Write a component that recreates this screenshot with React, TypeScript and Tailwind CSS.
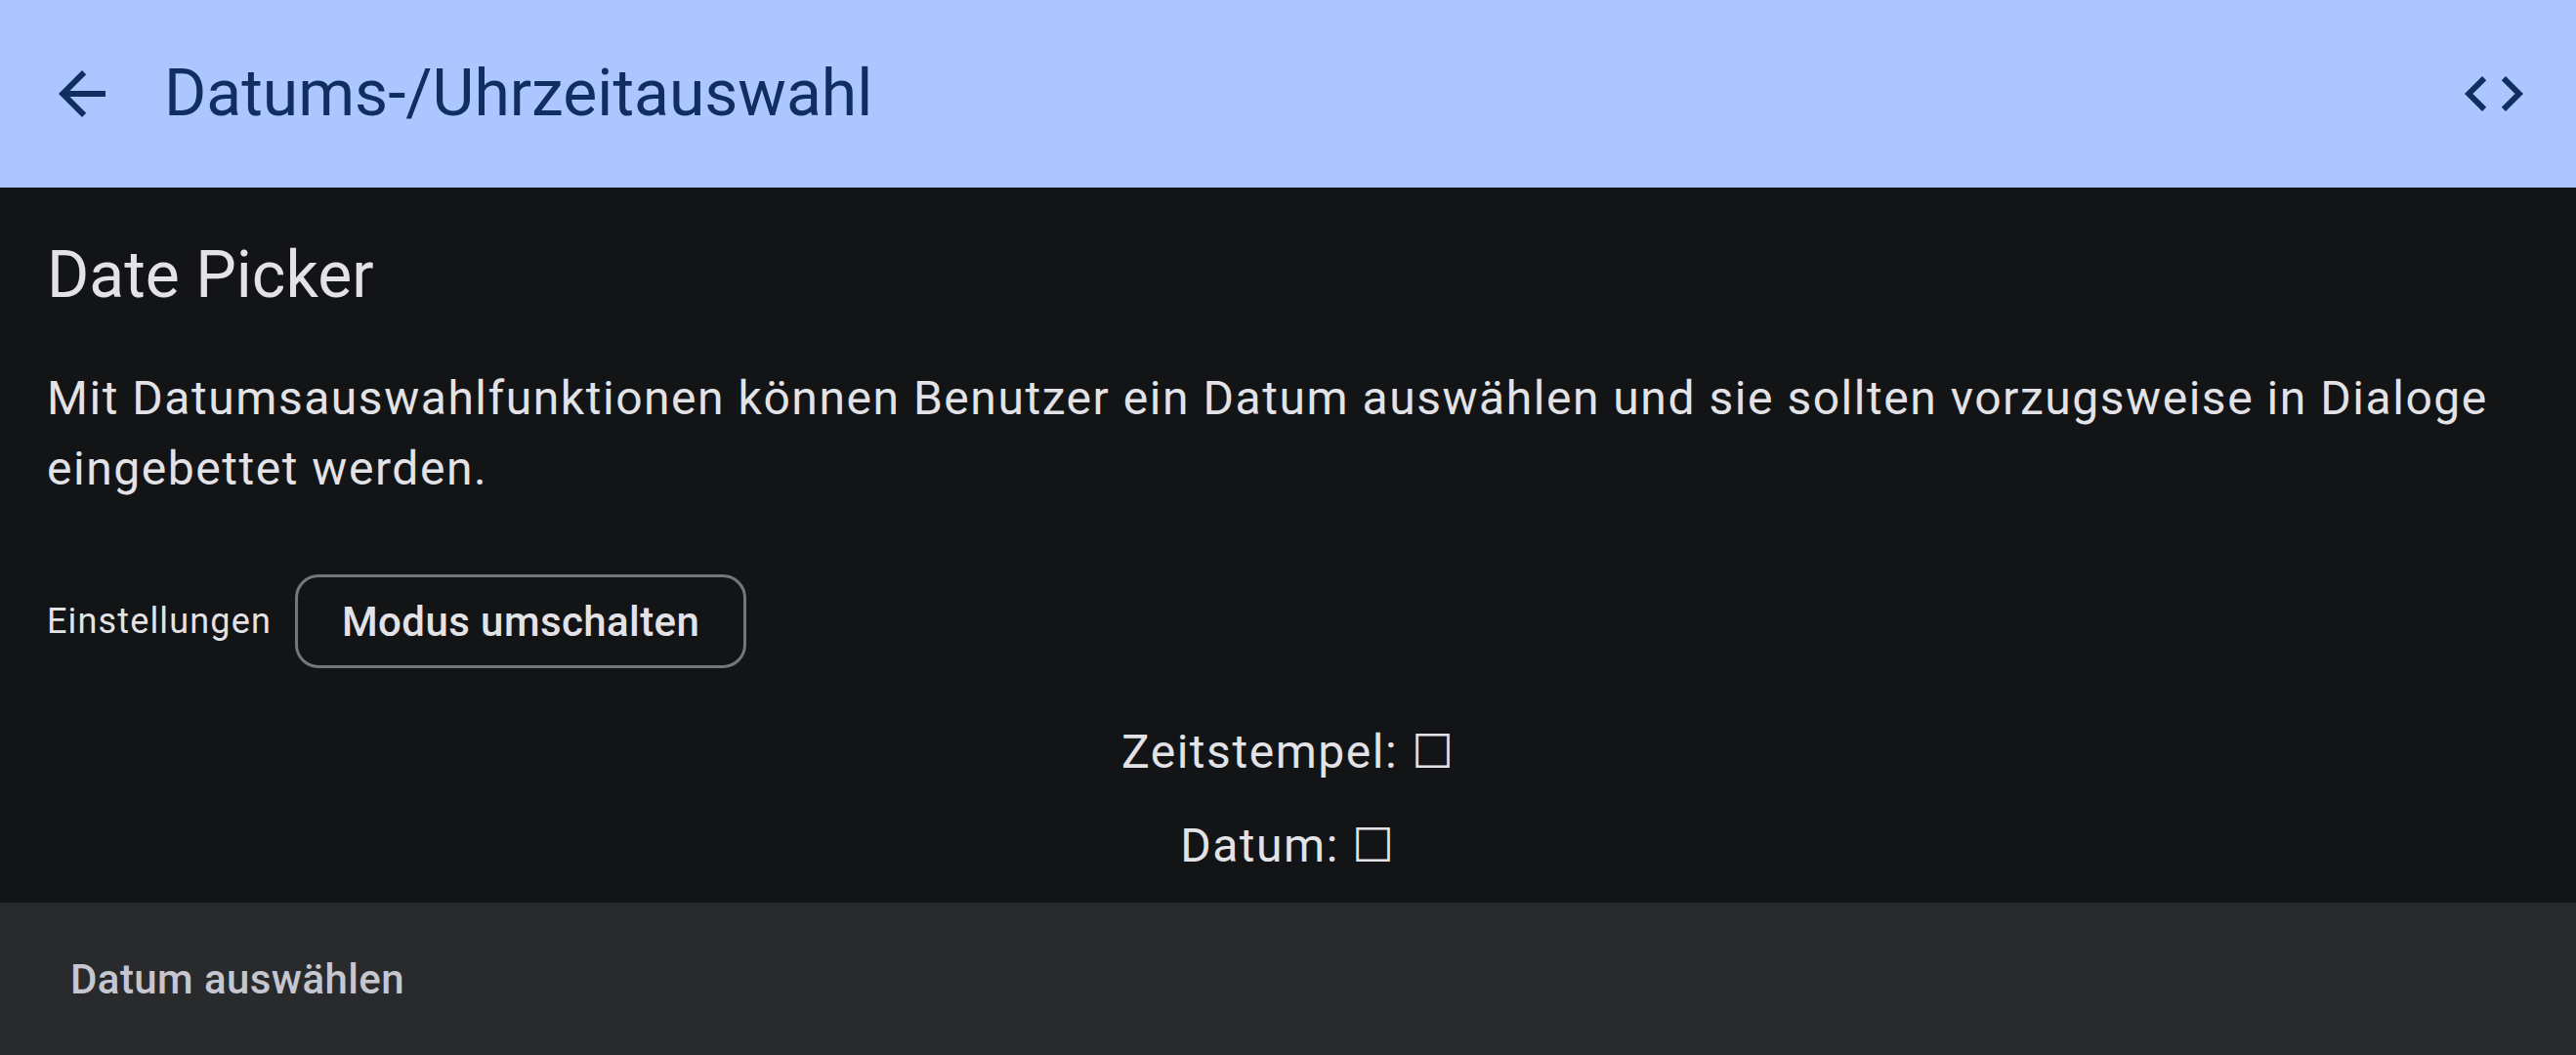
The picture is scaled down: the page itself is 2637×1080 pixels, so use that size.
export default function App() {
  return (
    <div className="flex min-h-screen flex-col bg-[#121416] font-['Roboto',sans-serif] text-[#e3e2e6]">
      <header className="flex min-h-48 items-center bg-[#adc6ff] px-12 text-[#102f60]">
        <button type="button" aria-label="Zurück" className="size-18">
          <svg viewBox="0 0 24 24" className="size-18" fill="currentColor">
            <path d="M20 11H7.83l5.59-5.59L12 4l-8 8 8 8 1.41-1.41L7.83 13H20v-2z" />
          </svg>
        </button>
        <h1 className="ml-12 flex-1 text-[66px] leading-[84px]">Datums-/Uhrzeitauswahl</h1>
        <button type="button" aria-label="Quellcode" className="size-18">
          <svg viewBox="0 0 24 24" className="size-18" fill="currentColor">
            <path d="M9.4 16.6L4.8 12l4.6-4.6L8 6l-6 6 6 6 1.4-1.4zm5.2 0l4.6-4.6-4.6-4.6L16 6l6 6-6 6-1.4-1.4z" />
          </svg>
        </button>
      </header>
      <main className="flex flex-1 flex-col px-12 pt-12 pb-5">
        <h2 className="text-[66px] leading-[84px]">Date Picker</h2>
        <p className="mt-12 text-[48px] leading-[72px] tracking-[0.032em]">
          Mit Datumsauswahlfunktionen können Benutzer ein Datum auswählen und sie sollten vorzugsweise in Dialoge eingebettet werden.
        </p>
        <div className="mt-18 flex items-center gap-6">
          <span className="text-[36px] leading-[48px] tracking-[0.032em]">Einstellungen</span>
          <button type="button" className="h-24 rounded-3xl border-3 border-[#757679] px-[45px] text-[42px] font-medium tracking-[0.01em]">
            Modus umschalten
          </button>
        </div>
        <div className="mt-[50px] flex flex-col items-center gap-6 text-[48px] leading-[72px] tracking-[0.032em]">
          <p>Zeitstempel: ☐</p>
          <p>Datum: ☐</p>
        </div>
      </main>
      <footer className="flex min-h-39 items-center bg-[#292a2c] px-18">
        <button type="button" className="text-[42px] font-medium tracking-[0.01em] text-[#c5c6d0]">
          Datum auswählen
        </button>
      </footer>
    </div>
  );
}
